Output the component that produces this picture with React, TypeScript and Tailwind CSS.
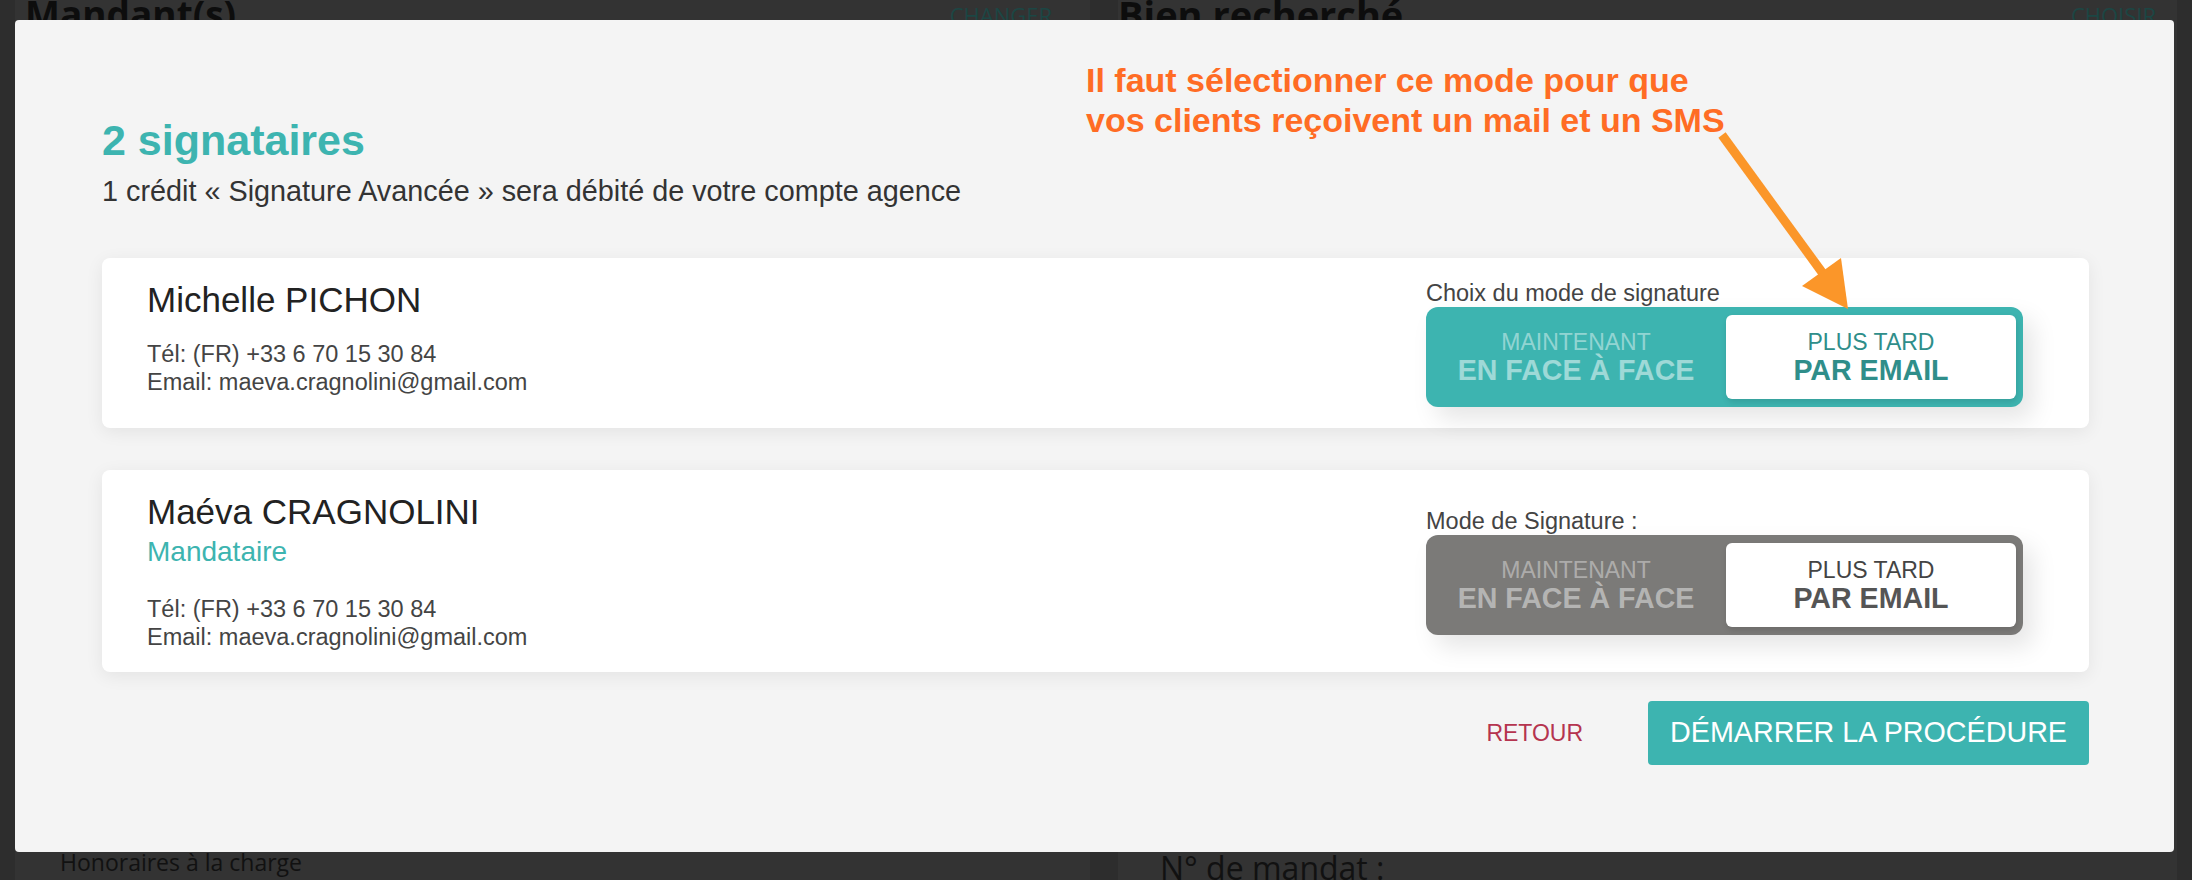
import React from 'react';

type Signer = {
  name: string;
  role?: string;
  phone: string;
  email: string;
  label: string;
  active: boolean;
};

const signers: Signer[] = [
  {
    name: 'Michelle PICHON',
    phone: 'Tél: (FR) +33 6 70 15 30 84',
    email: 'Email: maeva.cragnolini@gmail.com',
    label: 'Choix du mode de signature',
    active: true,
  },
  {
    name: 'Maéva CRAGNOLINI',
    role: 'Mandataire',
    phone: 'Tél: (FR) +33 6 70 15 30 84',
    email: 'Email: maeva.cragnolini@gmail.com',
    label: 'Mode de Signature :',
    active: false,
  },
];

function ModeToggle({ active }: { active: boolean }) {
  return (
    <div
      className={
        active
          ? 'flex h-[100px] w-[597px] rounded-[12px] bg-[#3db4b0] py-[8px] pr-[7px] shadow-[10px_12px_24px_rgba(0,0,0,0.10)]'
          : 'flex h-[100px] w-[597px] rounded-[12px] bg-[#7b7a78] py-[8px] pr-[7px] shadow-[10px_12px_24px_rgba(0,0,0,0.10)]'
      }
    >
      <div className="flex flex-1 flex-col items-center justify-center">
        <span className={active ? 'text-[23px] leading-[26px] text-white/45' : 'text-[23px] leading-[26px] text-white/40'}>
          MAINTENANT
        </span>
        <span className={active ? 'text-[28.6px] font-bold leading-[30px] text-white/50' : 'text-[28.6px] font-bold leading-[30px] text-white/45'}>
          EN FACE À FACE
        </span>
      </div>
      <div className="flex w-[290px] flex-col items-center justify-center rounded-[6px] bg-white shadow-[1px_3px_6px_rgba(0,0,0,0.12)]">
        <span className={active ? 'text-[23px] leading-[26px] text-[#2f8e8a]' : 'text-[23px] leading-[26px] text-[#444]'}>
          PLUS TARD
        </span>
        <span className={active ? 'text-[28.6px] font-bold leading-[30px] text-[#2f8e8a]' : 'text-[28.6px] font-bold leading-[30px] text-[#555]'}>
          PAR EMAIL
        </span>
      </div>
    </div>
  );
}

function SignerCard({ signer }: { signer: Signer }) {
  return (
    <div className="flex items-center justify-between rounded-[8px] bg-white py-[21px] pl-[45px] pr-[66px] shadow-[0_4px_18px_rgba(0,0,0,0.07)]">
      <div className="flex flex-col self-start">
        <div className="text-[35px] leading-[42px] text-[#222]">{signer.name}</div>
        {signer.role && (
          <div className="mt-[2px] text-[28px] leading-[34px] text-[#3db4b0]">{signer.role}</div>
        )}
        <div className={signer.role ? 'mt-[26px] text-[23.5px] leading-[28px] text-[#444]' : 'mt-[19px] text-[23.5px] leading-[28px] text-[#444]'}>
          <div>{signer.phone}</div>
          <div>{signer.email}</div>
        </div>
      </div>
      <div className="flex flex-col">
        <div className="text-[23.5px] leading-[28px] text-[#444]">{signer.label}</div>
        <ModeToggle active={signer.active} />
      </div>
    </div>
  );
}

export default function App() {
  return (
    <div className="relative h-[880px] w-[2192px] overflow-hidden bg-[#2d2d2d] font-['Liberation_Sans',Arial,sans-serif]">
      {/* page behind the modal */}
      <div className="flex h-full gap-[28px] px-[15px] font-['Open_Sans',sans-serif]">
        <div className="flex w-[1075px] flex-col justify-between bg-[#333]">
          <div className="flex justify-between pl-[10px] pr-[38px]">
            <span className="-mt-[4px] text-[37px] font-bold leading-[36px] text-[#0d0d0d]">Mandant(s)</span>
            <span className="mt-[3px] text-[22px] leading-[24px] text-[#1c4644]">CHANGER</span>
          </div>
          <div className="pb-[4px] pl-[45px] text-[23px] leading-[28px] text-[#111]">
            Honoraires à la charge
          </div>
        </div>
        <div className="flex flex-1 flex-col justify-between bg-[#333]">
          <div className="flex justify-between pr-[21px]">
            <span className="-mt-[4px] text-[38px] font-bold leading-[36px] text-[#0d0d0d]">Bien recherché</span>
            <span className="mt-[3px] text-[22px] leading-[24px] text-[#1c4644]">CHOISIR</span>
          </div>
          <div className="-mb-[6px] pl-[42px] text-[32px] leading-[36px] text-[#111]">N° de mandat :</div>
        </div>
      </div>

      {/* modal */}
      <div className="absolute left-[15px] top-[20px] flex h-[832px] w-[2159px] flex-col rounded-[4px] bg-[#f4f4f4] pl-[87px] pr-[85px] pt-[95px]">
        <h1 className="text-[43px] font-bold leading-[50px] text-[#3db4b0]">2 signataires</h1>
        <p className="mt-[9px] text-[28.8px] leading-[34px] text-[#333]">
          1 crédit « Signature Avancée » sera débité de votre compte agence
        </p>

        <div className="mt-[50px] flex flex-col gap-[42px]">
          {signers.map((s) => (
            <SignerCard key={s.name} signer={s} />
          ))}
        </div>

        <div className="mt-[29px] flex items-center justify-end">
          <button className="mr-[65px] text-[23px] leading-[28px] text-[#b5344f]">RETOUR</button>
          <button className="h-[64px] rounded-[4px] bg-[#3db4b0] px-[22px] text-[28.7px] text-white">
            DÉMARRER LA PROCÉDURE
          </button>
        </div>

        {/* annotation */}
        <div className="absolute left-[1071px] top-[40px] text-[34px] font-bold leading-[40px] text-[#ff6c24]">
          <div>Il faut sélectionner ce mode pour que</div>
          <div>vos clients reçoivent un mail et un SMS</div>
        </div>
        <svg className="absolute left-[1685px] top-[100px]" width="170" height="200" viewBox="0 0 170 200">
          <line x1="22" y1="15" x2="124" y2="155" stroke="#fb9629" strokeWidth="9" />
          <polygon points="148,189 102,166 141,138" fill="#fb9629" />
        </svg>
      </div>
    </div>
  );
}
